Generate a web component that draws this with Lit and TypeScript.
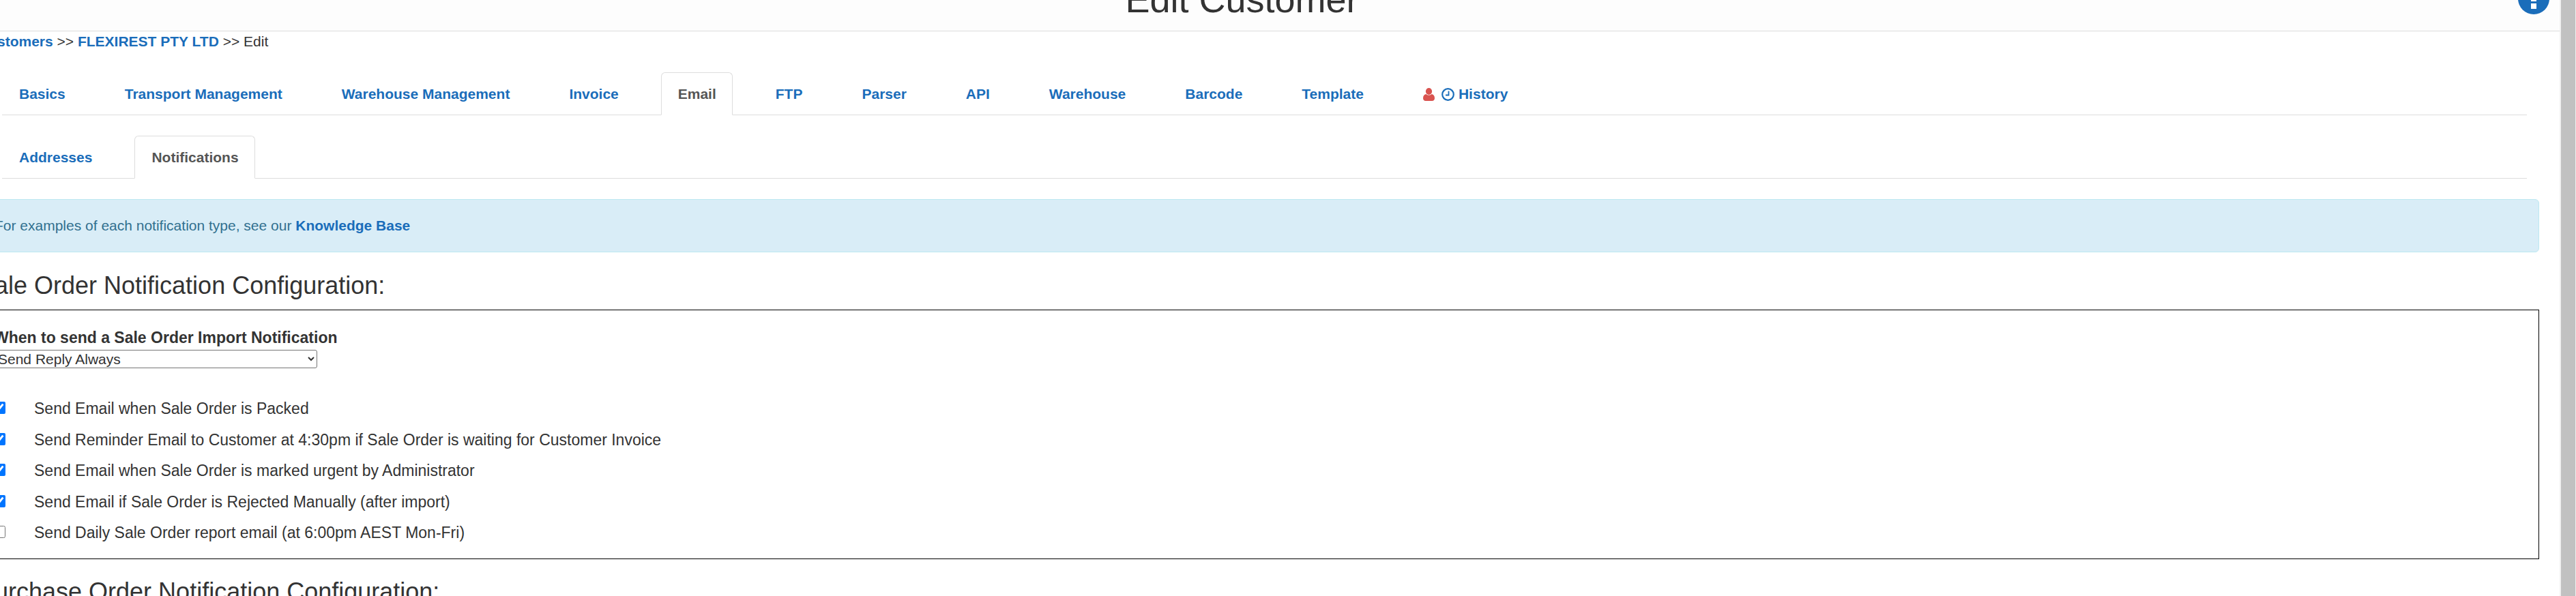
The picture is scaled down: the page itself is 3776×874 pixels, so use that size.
import { LitElement, html, css } from "lit";
import { customElement } from "lit/decorators.js";

const TABS = ["Basics", "Transport Management", "Warehouse Management", "Invoice", "Email", "FTP", "Parser", "API", "Warehouse", "Barcode", "Template"];
const ROWS: [string, boolean][] = [
  ["Send Email when Sale Order is Packed", true],
  ["Send Reminder Email to Customer at 4:30pm if Sale Order is waiting for Customer Invoice", true],
  ["Send Email when Sale Order is marked urgent by Administrator", true],
  ["Send Email if Sale Order is Rejected Manually (after import)", true],
  ["Send Daily Sale Order report email (at 6:00pm AEST Mon-Fri)", false],
];

@customElement("app-root")
export class AppRoot extends LitElement {
  static styles = css`
    :host { display: flex; width: 3776px; height: 874px; overflow: hidden; background: #fff;
      font-family: "Liberation Sans", Arial, sans-serif; color: #333; font-size: 21px; }
    * { box-sizing: border-box; }
    a { color: #1a6dba; text-decoration: none; font-weight: 700; }
    .main { flex: 1; min-width: 0; overflow: hidden; }
    .page { width: 3865px; margin-left: -113px; position: relative; }
    .header { height: 46px; background: #fdfdfd; border-bottom: 1px solid #ddd; overflow: hidden; display: flex; justify-content: center; align-items: flex-end; }
    .title { margin: 0 0 16px 2px; font-size: 54px; line-height: 60px; font-weight: 400; color: #333; white-space: nowrap; }
    .info { position: absolute; left: 3804px; top: -25px; width: 46px; height: 46px; }
    .content { margin-left: 89px; width: 3746px; }
    .crumb { height: 60px; padding: 4px 0 0 0; line-height: 22px; white-space: nowrap; margin-left: -8px; }
    .crumb span { font-weight: 400; }
    .tabs { display: flex; list-style: none; margin: 0 18px 0 27px; padding: 0; height: 63px; border-bottom: 1px solid #ddd; }
    .tabs.sub { margin-top: 30px; }
    .tabs li { height: 63px; padding: 0 23px 0 24px; margin-right: 38px; border: 1px solid transparent; border-bottom: 0; border-radius: 6px 6px 0 0; display: flex; align-items: center; gap: 0; white-space: nowrap; }
    .tabs li a { line-height: 24px; display: flex; align-items: center; }
    .tabs li.on { background: #fff; border-color: #ddd; border-bottom: 1px solid #fff; }
    .tabs li.on a { color: #555; }
    .tabs svg { display: block; flex: none; }
    .hist-user { margin-right: 10px; }
    .hist-clock { margin-right: 6px; }
    .alert { margin-top: 30px; height: 78px; background: #d9edf7; border: 1px solid #bce8f1; border-radius: 6px; color: #31708f; display: flex; align-items: center; padding-left: 15px; white-space: pre; }
    h3 { margin: 0; font-size: 36px; line-height: 40px; font-weight: 400; color: #333; white-space: nowrap; }
    h3.first { margin-top: 29px; height: 55px; margin-left: -8px; }
    h3.second { margin-top: 28px; margin-left: -8px; }
    .box { height: 366px; border: 1px solid #000; padding: 27px 0 0 20px; }
    .lbl { font-weight: 700; font-size: 23px; line-height: 26px; height: 31px; margin-left: -6px; }
    select { display: block; width: 473px; height: 27px; margin: 0 0 0 -5px; font: 21px "Liberation Sans", Arial, sans-serif; color: #333; background: #fff; border: 1px solid #767676; border-radius: 3px; padding: 0; }
    .rows { margin: 47px 0 0 -7px; display: flex; flex-direction: column; gap: 20px; }
    .row { display: flex; align-items: center; height: 25.5px; gap: 42px; font-size: 23px; white-space: nowrap; }
    .row input { width: 18px; height: 18px; margin: 0 0 3px; flex: none; accent-color: #0075ff; }
    .scroll { flex: none; width: 24px; background: #f1f1f1; padding: 0 1px 0 2px; }
    .thumb { height: 100%; background: #c1c1c1; }
  `;

  render() {
    return html`
      <div class="main"><div class="page">
        <div class="header"><h1 class="title">Edit Customer</h1></div>
        <svg class="info" viewBox="0 0 46 46"><circle cx="23" cy="23" r="23" fill="#1a6dba"/><rect x="19" y="30" width="8" height="8" fill="#fff"/><rect x="19" y="18" width="8" height="9" fill="#fff"/></svg>
        <div class="content">
          <div class="crumb"><a>Customers</a> <span>&gt;&gt;</span> <a>FLEXIREST PTY LTD</a> <span>&gt;&gt; Edit</span></div>
          <ul class="tabs">
            ${TABS.map((t) => html`<li class=${t === "Email" ? "on" : ""}><a>${t}</a></li>`)}
            <li><a>
              <svg class="hist-user" width="17" height="19" viewBox="0 0 17 19"><ellipse cx="8.5" cy="5" rx="4.6" ry="5" fill="#d9534f"/><path d="M0 15c0-3.6 2-5.6 4.6-6 1 1 2.300 1.500 3.900 1.500s2.900-.5 3.900-1.500c2.600.4 4.600 2.400 4.600 6 0 2.600-1.700 4-3.700 4H3.700C1.700 19 0 17.600 0 15z" fill="#d9534f"/></svg>
              <svg class="hist-clock" width="19" height="19" viewBox="0 0 19 19"><circle cx="9.500" cy="9.500" r="8.300" fill="none" stroke="#1a6dba" stroke-width="2.200"/><path d="M10.500 4.500v6H6" fill="none" stroke="#1a6dba" stroke-width="1.800"/></svg>
              History</a></li>
          </ul>
          <ul class="tabs sub">
            <li><a>Addresses</a></li>
            <li class="on"><a>Notifications</a></li>
          </ul>
          <div class="alert">For examples of each notification type, see our <a>Knowledge Base</a></div>
          <h3 class="first">Sale Order Notification Configuration:</h3>
          <div class="box">
            <div class="lbl">When to send a Sale Order Import Notification</div>
            <select><option>Send Reply Always</option></select>
            <div class="rows">
              ${ROWS.map(([t, c]) => html`<label class="row"><input type="checkbox" .checked=${c} /><span>${t}</span></label>`)}
            </div>
          </div>
          <h3 class="second">Purchase Order Notification Configuration:</h3>
        </div>
      </div></div>
      <div class="scroll"><div class="thumb"></div></div>
    `;
  }
}
